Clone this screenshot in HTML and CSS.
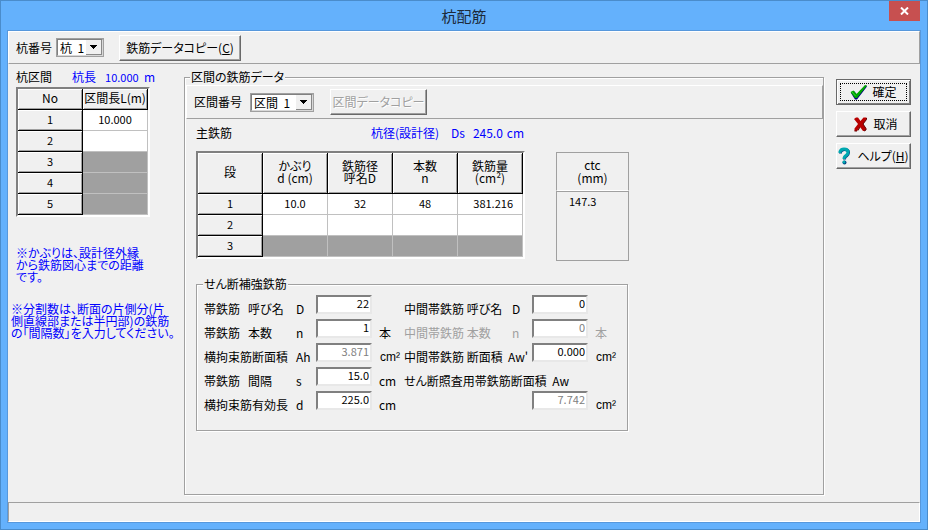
FILE: index.html
```html
<!DOCTYPE html>
<html lang="ja">
<head>
  <meta charset="UTF-8">
  <meta name="viewport" content="width=device-width, initial-scale=1.0">
  <title>杭配筋</title>
  <link rel="stylesheet" href="styles.css">
</head>
<body>

  <div class="window">
    <header class="titleBar">
      <h1>杭配筋</h1>
      <button class="closeBtn" type="button" aria-label="閉じる">
        <svg width="9" height="8" viewBox="0 0 9 8"><path d="M1 0.5L8 7.5M8 0.5L1 7.5" stroke="#fff" stroke-width="2"/></svg>
      </button>
    </header>

    <div class="client">
      <div class="toolbar mainToolbar">
        <label for="pileSelect">杭番号</label>
        <select id="pileSelect" class="pileSelect">
          <option>杭&nbsp; 1</option>
        </select>
        <button class="btn copyBtn" type="button">鉄筋データコピー(<u>C</u>)</button>
      </div>

      <main class="content">
        <section class="sections">
          <div class="sectionHead">
            <span>杭区間</span>
            <span class="blue">杭長</span>
            <span class="blue num">10.000</span>
            <span class="blue">m</span>
          </div>
          <table class="grid">
            <thead>
              <tr><th>No</th><th>区間長L(m)</th></tr>
            </thead>
            <tbody>
              <tr><th>1</th><td>10.000</td></tr>
              <tr><th>2</th><td></td></tr>
              <tr class="off"><th>3</th><td></td></tr>
              <tr class="off"><th>4</th><td></td></tr>
              <tr class="off"><th>5</th><td></td></tr>
            </tbody>
          </table>
          <p class="note coverNote">※かぶりは、設計径外縁<br>から鉄筋図心までの距離<br>です。</p>
          <p class="note divNote">※分割数は、断面の片側分(片<br>側直線部または半円部)の鉄筋<br>の「間隔数」を入力してください。</p>
        </section>

        <fieldset class="group barData">
          <legend>区間の鉄筋データ</legend>
          <div class="toolbar subToolbar">
            <label for="sectionSelect">区間番号</label>
            <select id="sectionSelect" class="sectionSelect">
              <option>区間&nbsp; 1</option>
            </select>
            <button class="btn sectionCopyBtn" type="button" disabled>区間データコピー</button>
          </div>

          <div class="barBody">
            <div class="barHead">
              <span class="barTitle">主鉄筋</span>
              <span class="blue diameter">杭径(設計径)</span>
              <span class="blue">Ds</span>
              <span class="blue num">245.0</span>
              <span class="blue">cm</span>
            </div>

            <div class="barTables">
              <table class="grid barGrid">
                <thead>
                  <tr>
                    <th>段</th>
                    <th>かぶり<br>d (cm)</th>
                    <th>鉄筋径<br>呼名D</th>
                    <th>本数<br>n</th>
                    <th>鉄筋量<br>(cm²)</th>
                  </tr>
                </thead>
                <tbody>
                  <tr><th>1</th><td>10.0</td><td>32</td><td>48</td><td class="area">381.216</td></tr>
                  <tr><th>2</th><td></td><td></td><td></td><td></td></tr>
                  <tr class="off"><th>3</th><td></td><td></td><td></td><td></td></tr>
                </tbody>
              </table>
              <table class="ctc">
                <thead><tr><th>ctc<br>(mm)</th></tr></thead>
                <tbody><tr><td>147.3</td></tr></tbody>
              </table>
            </div>

            <fieldset class="group shear">
              <legend>せん断補強鉄筋</legend>
              <div class="shearGrid">
                <label for="hoopD"><span>帯鉄筋   呼び名</span><span>D</span></label>
                <input id="hoopD" type="text" value="22">
                <span class="unit"></span>
                <label class="wide" for="midD"><span>中間帯鉄筋 呼び名</span><span>D</span></label>
                <input id="midD" type="text" value="0">
                <span class="unit"></span>

                <label for="hoopN"><span>帯鉄筋   本数</span><span>n</span></label>
                <input id="hoopN" type="text" value="1">
                <span class="unit">本</span>
                <label class="wide dim" for="midN"><span>中間帯鉄筋 本数</span><span>n</span></label>
                <input id="midN" type="text" value="0" disabled>
                <span class="unit dim">本</span>

                <label for="areaAh"><span>横拘束筋断面積</span><span>Ah</span></label>
                <input id="areaAh" type="text" value="3.871" disabled>
                <span class="unit sq">cm²</span>
                <label class="wide long" for="midArea"><span>中間帯鉄筋 断面積</span><span>Aw'</span></label>
                <input id="midArea" type="text" value="0.000">
                <span class="unit sq">cm²</span>

                <label for="hoopS"><span>帯鉄筋   間隔</span><span>s</span></label>
                <input id="hoopS" type="text" value="15.0">
                <span class="unit">cm</span>
                <label class="full" for="areaAw">せん断照査用帯鉄筋断面積  Aw</label>

                <label for="effD"><span>横拘束筋有効長</span><span>d</span></label>
                <input id="effD" type="text" value="225.0">
                <span class="unit">cm</span>
                <input id="areaAw" class="lastInput" type="text" value="7.742" disabled>
                <span class="unit sq">cm²</span>
              </div>
            </fieldset>
          </div>
        </fieldset>

        <div class="actions">
          <button class="btn okBtn" type="button">
            <svg width="18" height="16" viewBox="0 0 18 16">
              <path d="M1 9L4 7L7 10.500L15.500 1.500L17 2.500L7 15.500L5 15.500Z" fill="#000080"/>
              <path d="M0.500 8L3.500 6.500L6.500 10L15 1L17 1.500L7 14L5 14Z" fill="#00a800"/>
              <path d="M2 8L5.500 12" stroke="#3c3" stroke-width="1"/>
            </svg>
            <span>確定</span>
          </button>
          <button class="btn cancelBtn" type="button">
            <svg width="15" height="16" viewBox="0 0 15 16">
              <path d="M1 3L3 1.500H5L7.500 5L10.500 1.500H13.500V3.500L10 8L13 12.500V14L11 15H10L7 11L4 15H1.500V12.500L5 8Z" fill="#b80000"/>
              <path d="M13.500 2V3.500L10 8L13 12.500V14L11 15M5 14.500L7 11M4 15H1.500" fill="none" stroke="#600000"/>
            </svg>
            <span>取消</span>
          </button>
          <button class="btn helpBtn" type="button">
            <svg width="13" height="18" viewBox="0 0 13 18">
              <path d="M2.500 6.500V5Q3.500 2.500 6.500 2.500Q10.500 2.500 10.500 5.500Q10.500 7.500 8.500 9Q6.500 10 6.500 12.500" fill="none" stroke="#004080" stroke-width="3"/>
              <path d="M2 6V4.500Q3 2 6 2Q10 2 10 5Q10 7 8 8.500Q6 9.500 6 12" fill="none" stroke="#00a8b0" stroke-width="3"/>
              <circle cx="6.500" cy="15.500" r="2" fill="#004080"/>
              <circle cx="6" cy="15" r="1.500" fill="#00a8b0"/>
            </svg>
            <span>ヘルプ(<u>H</u>)</span>
          </button>
        </div>
      </main>

      <footer class="statusBar"></footer>
    </div>
  </div>

</body>
</html>
```
FILE: styles.css
```css
* {
  box-sizing: border-box;
}
body {
  margin: 0;
  font-family: "Noto Sans CJK JP", sans-serif;
  font-size: 12px;
  line-height: 14px;
  font-feature-settings: "palt";
  color: #000;
}
button, input, select {
  font: inherit;
  font-feature-settings: inherit;
  color: inherit;
  margin: 0;
  border-radius: 0;
}
.window {
  min-height: 100vh;
  display: flex;
  flex-direction: column;
  padding: 0 7px 7px;
  background-color: #64b1fc;
  border: 1px solid #4a8ccb;
}

/* title bar */
.titleBar {
  display: grid;
  grid-template-columns: 1fr auto 1fr;
  height: 30px;
}
.titleBar h1 {
  grid-column: 2;
  margin: 0;
  font-size: 15px;
  line-height: 30px;
  font-weight: 400;
  color: #1c2a3a;
}
.closeBtn {
  justify-self: end;
  display: flex;
  align-items: center;
  justify-content: center;
  width: 31px;
  height: 20px;
  padding: 0;
  border: none;
  background-color: #c75050;
}
.client {
  flex: 1;
  display: flex;
  flex-direction: column;
  background-color: #f0f0f0;
  outline: 1px solid #5798dc;
}

/* raised bars */
.toolbar {
  display: flex;
  align-items: center;
  border: 1px solid;
  border-color: #fff #a0a0a0 #a0a0a0 #fff;
}
.mainToolbar {
  height: 33px;
  padding-left: 7px;
}
.subToolbar {
  height: 34px;
  padding-left: 7px;
}
select {
  appearance: none;
  height: 19px;
  padding: 0 16px 0 2px;
  border: 2px solid;
  border-color: #808080 #d8d8d8 #d8d8d8 #808080;
  outline: 1px solid #a0a0a0;
  outline-offset: -1px;
  line-height: 15px;
  background: #fff url("data:image/svg+xml,%3Csvg xmlns='http://www.w3.org/2000/svg' width='16' height='15' shape-rendering='crispEdges'%3E%3Cpath fill='%23f0f0f0' d='M0 0h16v15H0z'/%3E%3Cpath fill='none' stroke='%23888' d='M15.5 0v14.5H0'/%3E%3Cpath d='M4 5h7v1h-1v1H9v1H8v1H7V8H6V7H5V6H4z'/%3E%3C/svg%3E") no-repeat right center;
}
.pileSelect {
  width: 48px;
  margin-left: 4px;
}
.sectionSelect {
  width: 64px;
  margin-left: 8px;
}
.btn {
  display: flex;
  align-items: center;
  justify-content: center;
  height: 26px;
  padding: 0;
  white-space: nowrap;
  background-color: #f0f0f0;
  border: 1px solid;
  border-color: #fff #696969 #696969 #fff;
  box-shadow: inset -1px -1px #a0a0a0;
}
.btn:disabled {
  color: #a0a0a0;
  text-shadow: 1px 1px #fff;
}
.copyBtn {
  width: 122px;
  margin-left: 15px;
}
.sectionCopyBtn {
  width: 97px;
  margin-left: 16px;
}

/* three columns under the toolbar */
.content {
  flex: 1;
  display: flex;
}
.sections {
  width: 176px;
  padding: 6px 0 0 8px;
}
.sectionHead {
  display: flex;
  margin-bottom: 3px;
}
.sectionHead span:nth-child(2) {
  margin-left: 20px;
}
.sectionHead span:nth-child(3) {
  width: 31px;
  margin: 0 8px 0 9px;
}
.blue {
  color: #00f;
}
.sectionHead .num {
  font-size: 11px;
}

.grid {
  width: 134px;
  table-layout: fixed;
  border-spacing: 0;
  border: 2px solid;
  border-color: #808080 #fff #fff #808080;
}
.grid th, .grid td {
  height: 21px;
  padding: 0 0 2px;
  font-size: 11px;
  line-height: 12px;
  font-weight: 400;
  text-align: center;
}
.grid th {
  background-color: #f0f0f0;
  border: solid #000;
  border-width: 0 1px 1px 0;
  box-shadow: inset 1px 1px #fff, inset -1px -1px #a0a0a0;
}
.grid thead th {
  font-size: 12px;
  white-space: nowrap;
}
.grid td {
  background-color: #fff;
  border: solid #c0c0c0;
  border-width: 0 1px 1px 0;
}
.grid .off td {
  background-color: #a0a0a0;
}
.note {
  margin: 0;
  line-height: 12px;
  color: #00f;
  white-space: nowrap;
}
.coverNote {
  margin-top: 30px;
}
.divNote {
  margin: 20px 0 0 -5px;
}

/* group boxes */
.group {
  min-width: 0;
  margin: 0;
  border: 1px solid #a0a0a0;
  box-shadow: 1px 1px #fff, inset 1px 1px #fff;
}
.group legend {
  padding: 0 1px;
  background-color: #f0f0f0;
}
.barData {
  flex: 1;
  margin: 6px 0 7px;
  padding: 1px 0 1px 1px;
}
.barData > legend {
  margin-left: 4px;
}
.barBody {
  padding: 7px 10px 0;
}
.barHead {
  display: flex;
}
.barTitle {
  width: 175px;
}
.barHead .diameter {
  width: 72px;
}
.barHead .blue + .blue {
  margin-left: 8px;
}
.barHead .num + .blue {
  margin-left: 4px;
}
.barTables {
  display: flex;
  align-items: flex-start;
  margin: 11px 0 16px;
}
.barGrid {
  width: 329px;
}
.barGrid thead th {
  height: 41px;
}
.grid .area {
  text-align: right;
  padding-right: 9px;
}
.ctc {
  width: 73px;
  margin: 1px 0 0 31px;
  border-spacing: 0;
}
.ctc th, .ctc td {
  padding: 0 0 2px;
  font-weight: 400;
  border: 1px solid;
  border-color: #a0a0a0 #a0a0a0 #fff #a0a0a0;
}
.ctc th {
  height: 39px;
  line-height: 13px;
}
.ctc td {
  height: 70px;
  padding: 2px 0 0 12px;
  font-size: 11px;
  vertical-align: top;
  border-bottom-color: #a0a0a0;
}

.shear {
  width: 432px;
  padding: 4px 7px 15px;
}
.shear > legend {
  margin-left: -1px;
}
.shearGrid {
  display: grid;
  grid-template-columns: 112px 56px 32px 128px 56px 1fr;
  grid-auto-rows: 24px;
}
.shearGrid label {
  display: grid;
  grid-template-columns: 92px 1fr;
  padding-top: 4px;
  line-height: 20px;
  white-space: pre;
}
.shearGrid .wide {
  grid-template-columns: 108px 1fr;
}
.shearGrid .long {
  grid-template-columns: 104px 1fr;
}
.shearGrid .full {
  display: block;
  grid-column: 4 / -1;
}
.shearGrid input {
  width: 56px;
  height: 19px;
  padding: 0 1px 3px;
  font-size: 11px;
  line-height: 12px;
  text-align: right;
  background-color: #fff;
  border: 2px solid;
  border-color: #808080 #e8e8e8 #e8e8e8 #808080;
}
.shearGrid input:disabled {
  color: #808080;
}
.shearGrid .lastInput {
  grid-column: 5;
}
.unit {
  padding: 4px 0 0 7px;
  line-height: 20px;
}
.sq {
  padding-left: 8px;
  font-family: "Liberation Sans", "Noto Sans CJK JP", sans-serif;
}
.shearGrid .dim {
  color: #a0a0a0;
}

/* buttons on the right */
.actions {
  display: flex;
  flex-direction: column;
  gap: 6px;
  width: 96px;
  padding: 15px 9px 0 12px;
}
.actions .btn {
  gap: 4px;
}
.actions .okBtn {
  border-color: #696969;
  box-shadow: inset 1px 1px #fff, inset -1px -1px #808080;
  outline: 1px dotted #000;
  outline-offset: -5px;
}
.actions .cancelBtn {
  gap: 5px;
  padding-left: 4px;
}
.actions .helpBtn {
  gap: 6px;
}
.statusBar {
  height: 20px;
  border: 1px solid;
  border-color: #a0a0a0 #fff #fff #a0a0a0;
}
```
